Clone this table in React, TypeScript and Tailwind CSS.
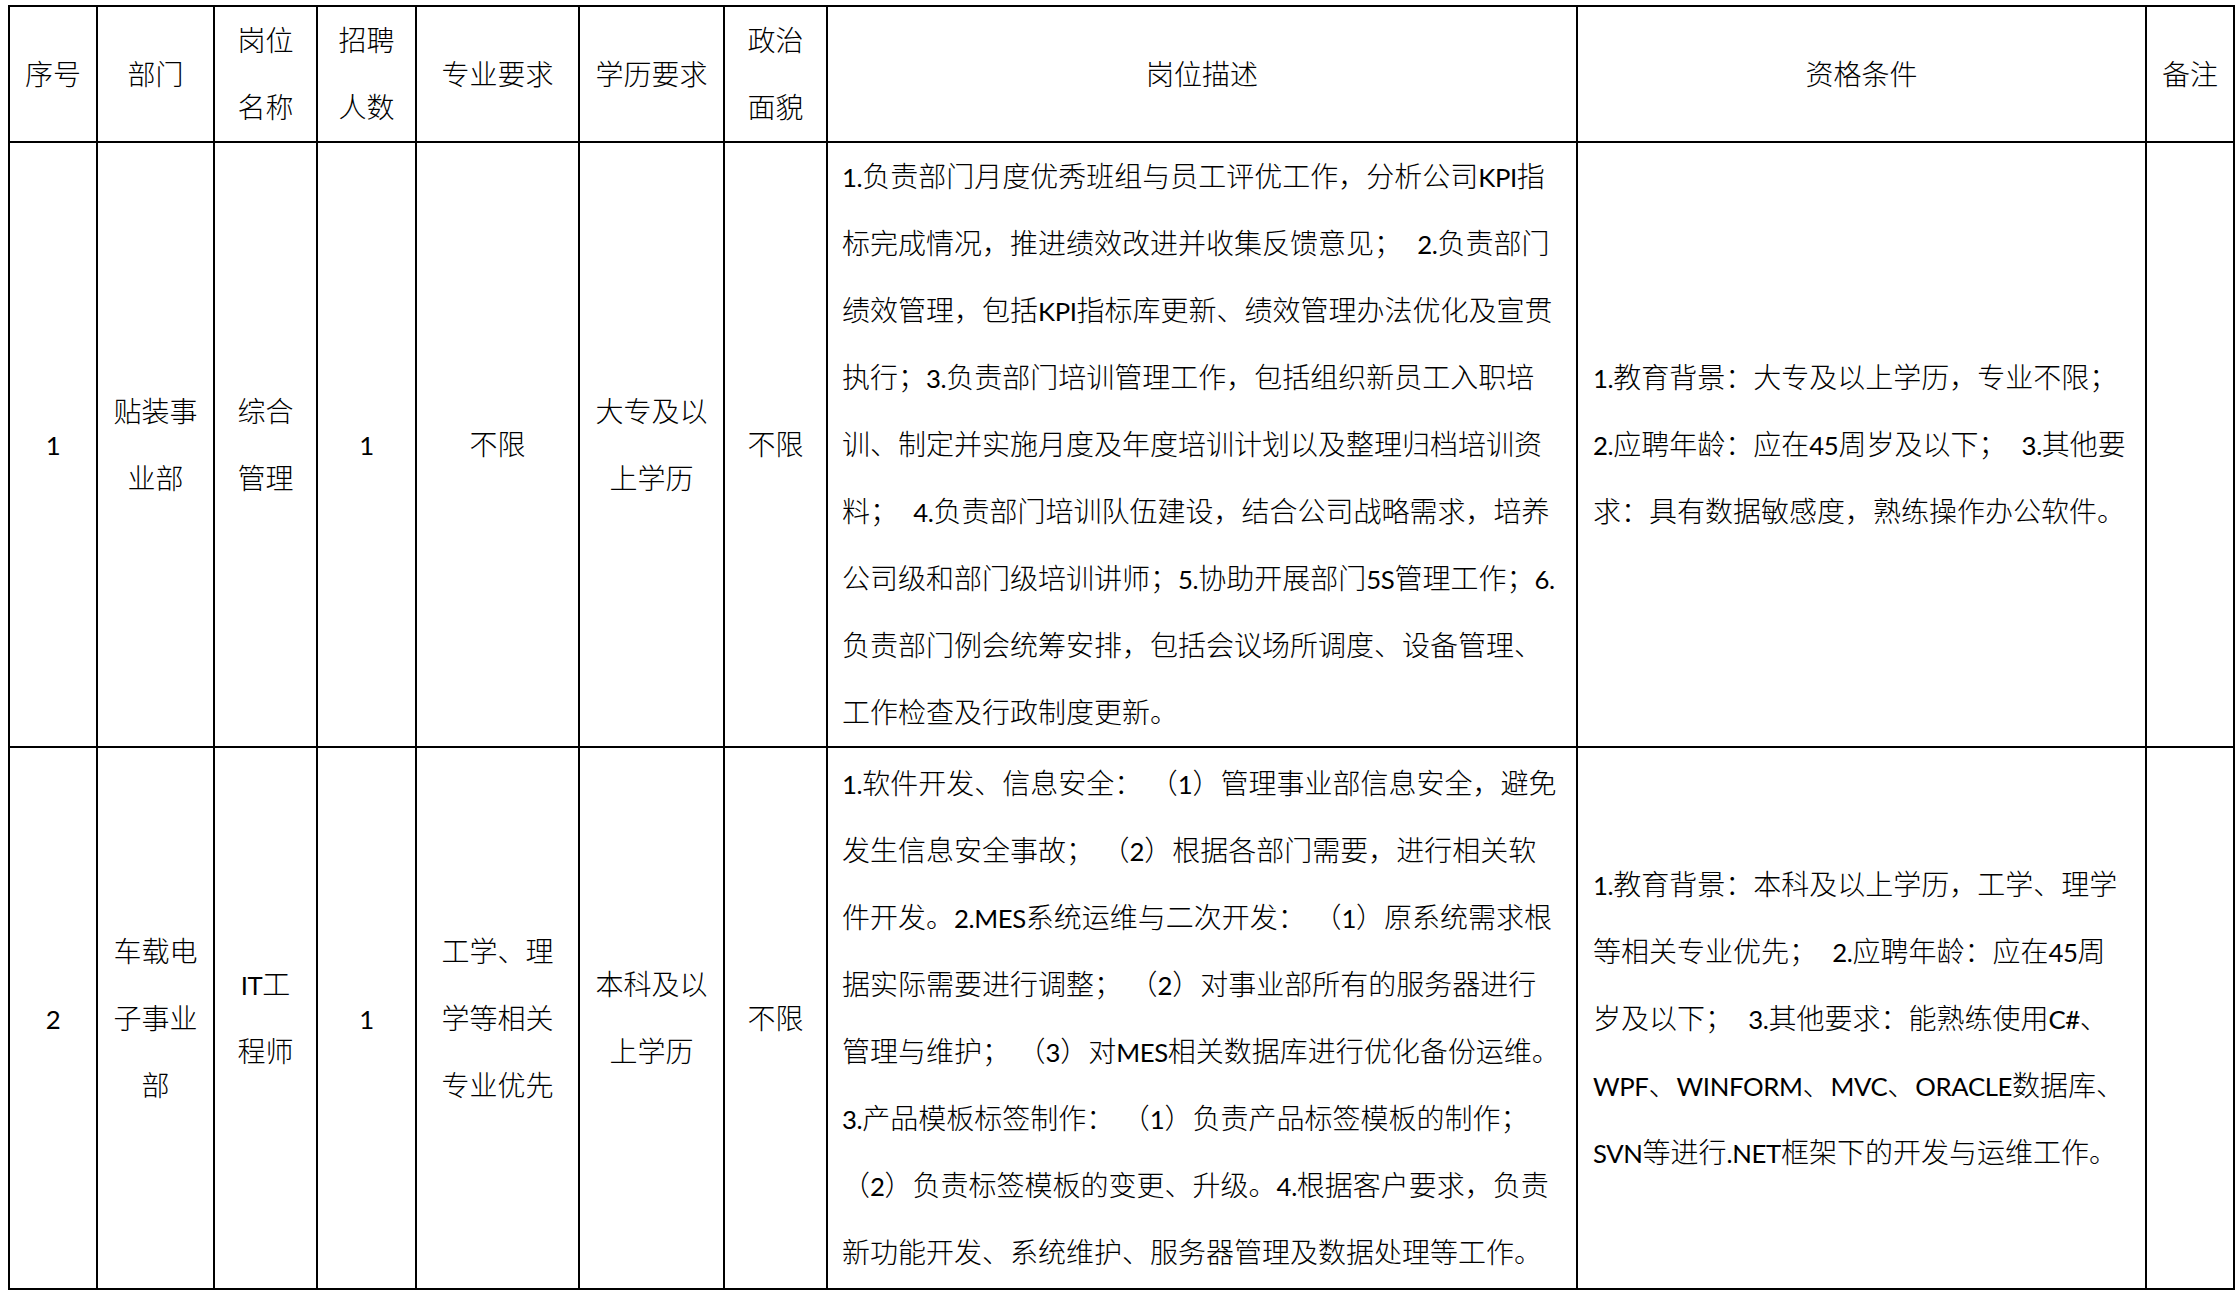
import React from "react";

type JobRow = {
  no: string;
  dept: string[];
  post: string[];
  count: string;
  major: string[];
  edu: string[];
  political: string;
  desc: string[];
  qual: string[];
  heightClass: string;
};

const NB = "\u00a0";

const rows: JobRow[] = [
  {
    no: "1",
    dept: ["贴装事", "业部"],
    post: ["综合", "管理"],
    count: "1",
    major: ["不限"],
    edu: ["大专及以", "上学历"],
    political: "不限",
    desc: [
      "1.负责部门月度优秀班组与员工评优工作，分析公司KPI指",
      `标完成情况，推进绩效改进并收集反馈意见；${NB}${NB}2.负责部门`,
      "绩效管理，包括KPI指标库更新、绩效管理办法优化及宣贯",
      "执行；3.负责部门培训管理工作，包括组织新员工入职培",
      "训、制定并实施月度及年度培训计划以及整理归档培训资",
      `料；${NB}${NB}4.负责部门培训队伍建设，结合公司战略需求，培养`,
      "公司级和部门级培训讲师；5.协助开展部门5S管理工作；6.",
      "负责部门例会统筹安排，包括会议场所调度、设备管理、",
      "工作检查及行政制度更新。",
    ],
    qual: [
      "1.教育背景：大专及以上学历，专业不限；",
      `2.应聘年龄：应在45周岁及以下；${NB}${NB}3.其他要`,
      "求：具有数据敏感度，熟练操作办公软件。",
    ],
    heightClass: "h-[604px]",
  },
  {
    no: "2",
    dept: ["车载电", "子事业", "部"],
    post: ["IT工", "程师"],
    count: "1",
    major: ["工学、理", "学等相关", "专业优先"],
    edu: ["本科及以", "上学历"],
    political: "不限",
    desc: [
      `1.软件开发、信息安全：${NB}（1）管理事业部信息安全，避免`,
      `发生信息安全事故；${NB}（2）根据各部门需要，进行相关软`,
      `件开发。2.MES系统运维与二次开发：${NB}（1）原系统需求根`,
      `据实际需要进行调整；${NB}（2）对事业部所有的服务器进行`,
      `管理与维护；${NB}（3）对MES相关数据库进行优化备份运维。`,
      `3.产品模板标签制作：${NB}（1）负责产品标签模板的制作；`,
      "（2）负责标签模板的变更、升级。4.根据客户要求，负责",
      "新功能开发、系统维护、服务器管理及数据处理等工作。",
    ],
    qual: [
      "1.教育背景：本科及以上学历，工学、理学",
      `等相关专业优先；${NB}${NB}2.应聘年龄：应在45周`,
      `岁及以下；${NB}${NB}3.其他要求：能熟练使用C#、`,
      "WPF、WINFORM、MVC、ORACLE数据库、",
      "SVN等进行.NET框架下的开发与运维工作。",
    ],
    heightClass: "h-[542px]",
  },
];

const cellBase = "border-2 border-black align-middle p-0";

// Latin runs (Calibri in the source) are set a bit smaller than the CJK text
function Mixed({ text }: { text: string }) {
  const parts = text.split(/([A-Za-z0-9#.]+)/);
  return (
    <>
      {parts.map((p, i) =>
        /^[A-Za-z0-9#.]+$/.test(p) ? (
          <span key={i} className="text-[0.92em] leading-none font-normal tracking-[-0.015em]">
            {p}
          </span>
        ) : (
          <React.Fragment key={i}>{p}</React.Fragment>
        )
      )}
    </>
  );
}

function Lines({ lines, className = "" }: { lines: string[]; className?: string }) {
  return (
    <div className={className}>
      {lines.map((l, i) => (
        <div key={i} className="h-[67px] whitespace-nowrap leading-[67px]">
          <Mixed text={l} />
        </div>
      ))}
    </div>
  );
}

function Center({ lines }: { lines: string[] }) {
  return (
    <td className={`${cellBase} text-center`}>
      <Lines lines={lines} />
    </td>
  );
}

export default function App() {
  return (
    <div className="min-h-screen bg-white pt-[5px] pl-[8px] text-black text-[28px] font-light [font-family:Lato,'Noto_Sans_CJK_SC',sans-serif]">
      <table className="w-[2225px] table-fixed border-collapse">
        <colgroup>
          <col className="w-[88px]" />
          <col className="w-[117px]" />
          <col className="w-[103px]" />
          <col className="w-[99px]" />
          <col className="w-[163px]" />
          <col className="w-[145px]" />
          <col className="w-[103px]" />
          <col className="w-[750px]" />
          <col className="w-[569px]" />
          <col className="w-[88px]" />
        </colgroup>
        <thead>
          <tr className="h-[136px]">
            <Center lines={["序号"]} />
            <Center lines={["部门"]} />
            <Center lines={["岗位", "名称"]} />
            <Center lines={["招聘", "人数"]} />
            <Center lines={["专业要求"]} />
            <Center lines={["学历要求"]} />
            <Center lines={["政治", "面貌"]} />
            <Center lines={["岗位描述"]} />
            <Center lines={["资格条件"]} />
            <Center lines={["备注"]} />
          </tr>
        </thead>
        <tbody>
          {rows.map((r) => (
            <tr key={r.no} className={r.heightClass}>
              <Center lines={[r.no]} />
              <Center lines={r.dept} />
              <Center lines={r.post} />
              <Center lines={[r.count]} />
              <Center lines={r.major} />
              <Center lines={r.edu} />
              <Center lines={[r.political]} />
              <td className={`${cellBase} text-left`}>
                <Lines lines={r.desc} className="pl-[14px]" />
              </td>
              <td className={`${cellBase} text-left`}>
                <Lines lines={r.qual} className="pl-[15px]" />
              </td>
              <td className={cellBase}></td>
            </tr>
          ))}
        </tbody>
      </table>
    </div>
  );
}
